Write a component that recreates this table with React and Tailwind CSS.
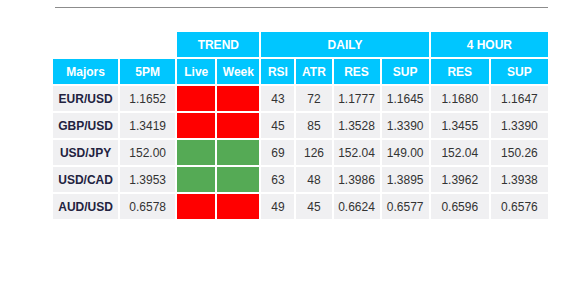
import React from "react";

const rows = [
  ["EUR/USD", "1.1652", "r", "r", "43", "72", "1.1777", "1.1645", "1.1680", "1.1647"],
  ["GBP/USD", "1.3419", "r", "r", "45", "85", "1.3528", "1.3390", "1.3455", "1.3390"],
  ["USD/JPY", "152.00", "g", "g", "69", "126", "152.04", "149.00", "152.04", "150.26"],
  ["USD/CAD", "1.3953", "g", "g", "63", "48", "1.3986", "1.3895", "1.3962", "1.3938"],
  ["AUD/USD", "0.6578", "r", "r", "49", "45", "0.6624", "0.6577", "0.6596", "0.6576"],
];

const th = "bg-[#00c6ff] text-white font-bold text-[12px] h-[25px] p-0 text-center align-middle";
const td = "bg-[#f0f0f2] text-[#333333] text-[12px] h-[25px] p-0 text-center align-middle";

export default function App() {
  return (
    <div className="w-[581px] h-[300px] bg-white" style={{ fontFamily: '"Liberation Sans", Arial, sans-serif' }}>
      <div className="pt-[7px]">
        <div className="ml-[55px] w-[493px] h-px bg-[#8c8c8c]" />
      </div>
      <table className="ml-[51px] mt-[22px] table-fixed border-separate border-spacing-[2px] w-[499px]">
        <colgroup>
          <col className="w-[65px]" />
          <col className="w-[55px]" />
          <col className="w-[38px]" />
          <col className="w-[42px]" />
          <col className="w-[33px]" />
          <col className="w-[35px]" />
          <col className="w-[46px]" />
          <col className="w-[47px]" />
          <col className="w-[58px]" />
          <col className="w-[57px]" />
        </colgroup>
        <thead>
          <tr>
            <th colSpan={2} className="h-[25px] p-0 bg-white"></th>
            <th colSpan={2} className={th}>TREND</th>
            <th colSpan={4} className={th}>DAILY</th>
            <th colSpan={2} className={th}>4 HOUR</th>
          </tr>
          <tr>
            {["Majors", "5PM", "Live", "Week", "RSI", "ATR", "RES", "SUP", "RES", "SUP"].map((h, i) => (
              <th key={i} className={th}>{h}</th>
            ))}
          </tr>
        </thead>
        <tbody>
          {rows.map((r, ri) => (
            <tr key={ri}>
              {r.map((c, ci) => {
                if (ci === 0)
                  return (
                    <td key={ci} className={td + " font-bold !text-[#22223f]"}>{c}</td>
                  );
                if (ci === 2 || ci === 3)
                  return (
                    <td key={ci} className={"h-[25px] p-0 " + (c === "r" ? "bg-[#ff0000]" : "bg-[#55aa55]")}></td>
                  );
                return <td key={ci} className={td}>{c}</td>;
              })}
            </tr>
          ))}
        </tbody>
      </table>
    </div>
  );
}
